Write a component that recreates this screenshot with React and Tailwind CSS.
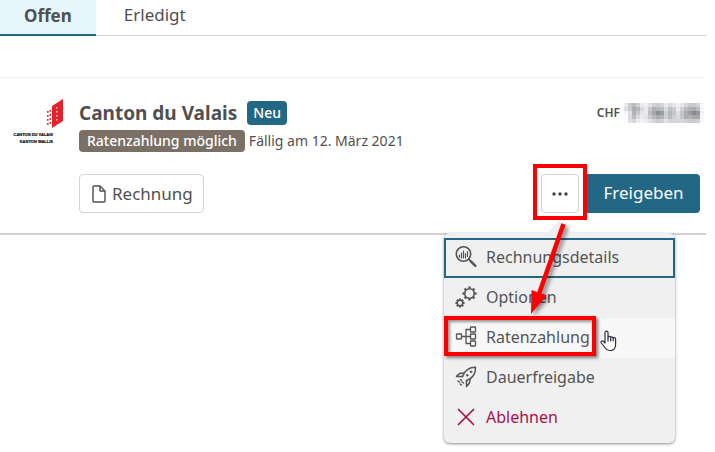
import React from 'react';

// Icons of the action menu, all drawn on a 24px grid
const SearchDetailsIcon = () => (
    <svg width="24" height="24" viewBox="0 0 24 24" fill="none" stroke="currentColor" strokeWidth="1.6" strokeLinecap="round">
        <circle cx="9.5" cy="9" r="7.2" />
        <path d="M5.5 10v2M7.5 8v5M9.5 6v7M11.5 8.5v4.5M13.5 6.5v5" strokeWidth="1.2" />
        <path d="M14.8 14.3l1.6 1.6" />
        <path d="M16.6 16.2l4.8 4.6" strokeWidth="2.4" />
    </svg>
);

const Gear = ({ cx, cy, r, tooth, width }) => (
    <g>
        <circle cx={cx} cy={cy} r={r} strokeWidth={width} />
        {[0, 45, 90, 135, 180, 225, 270, 315].map((angle) => (
            <path
                key={angle}
                d={`M${cx} ${cy - r}v${-tooth}`}
                strokeWidth={width + 0.8}
                transform={`rotate(${angle} ${cx} ${cy})`}
            />
        ))}
    </g>
);

const OptionsIcon = () => (
    <svg width="24" height="24" viewBox="0 0 24 24" fill="none" stroke="currentColor">
        <Gear cx={15.5} cy={8.5} r={4.7} tooth={2.3} width={1.6} />
        <Gear cx={6} cy={18} r={2.7} tooth={1.8} width={1.4} />
    </svg>
);

const InstallmentsIcon = () => (
    <svg width="24" height="24" viewBox="0 0 24 24" fill="none" stroke="currentColor" strokeWidth="1.3">
        <rect x="2.5" y="9" width="5" height="5" rx="0.5" />
        <rect x="16.5" y="2" width="5" height="5" rx="0.5" />
        <rect x="16.5" y="9" width="5" height="5" rx="0.5" />
        <rect x="16.5" y="16" width="5" height="5" rx="0.5" />
        <path d="M7.5 11.5h9M16.5 4.5h-4.5v14h4.5" />
    </svg>
);

const RocketIcon = () => (
    <svg width="24" height="24" viewBox="0 0 24 24" fill="none" stroke="currentColor" strokeWidth="1.5" strokeLinecap="round" strokeLinejoin="round">
        <path d="M8.5 11.5C10.5 6 15 2.2 21.5 2.2C21.8 9 18 13.5 12.5 15.5" />
        <path d="M10 8.2C7 7.5 4.5 8.5 2.5 11.5H8.5M16 13.5C16.3 17 15 19.5 12.5 21.5V15.5" />
        <circle cx="13.2" cy="10.3" r="0.9" fill="currentColor" strokeWidth="0.8" />
        <circle cx="17" cy="6.8" r="0.9" fill="currentColor" strokeWidth="0.8" />
        <path d="M6.5 14.5l1 .8M4 16l1.5 1M8 17l1.500 1M6 19l1.500 1" />
    </svg>
);

const RejectIcon = () => (
    <svg width="24" height="24" viewBox="0 0 24 24" fill="none" stroke="currentColor" strokeWidth="1.7" strokeLinecap="round">
        <path d="M4.5 4.5l15 15M19.5 4.5l-15 15" />
    </svg>
);

const DocumentIcon = () => (
    <svg width="14" height="18" viewBox="0 0 14 18" fill="none" stroke="currentColor" strokeWidth="1.4" strokeLinejoin="round">
        <path d="M1 2.2Q1 1 2.2 1H8l5 5v9.8Q13 17 11.8 17H2.2Q1 17 1 15.8z" />
        <path d="M8 1v5h5" />
    </svg>
);

const MoreIcon = () => (
    <svg width="18" height="4" viewBox="0 0 18 4" fill="#444">
        <circle cx="3" cy="2" r="1.7" />
        <circle cx="9" cy="2" r="1.7" />
        <circle cx="15" cy="2" r="1.7" />
    </svg>
);

const ValaisLogo = () => (
    <svg width="52" height="48" viewBox="0 0 52 48" role="img" aria-label="Canton du Valais" className="shrink-0 overflow-visible">
        <path d="M37 9L48 2v22l-11 7z" fill="#e3222b" />
        {[13, 17, 21, 25].map((y) => (
            <g key={y} fill="#e3222b">
                <rect x="32" y={y + 1} width="1.6" height="1.8" />
                <rect x="34.5" y={y} width="1.6" height="1.8" />
            </g>
        ))}
        {[10, 14, 18, 22].map((y) => (
            <rect key={y} x="41" y={y} width="1.5" height="1.5" fill="#f7c5c8" />
        ))}
        <g textAnchor="end" fontSize="4" fontWeight="bold" fontFamily="Liberation Sans, sans-serif" fill="#111" stroke="#111" strokeWidth="0.2">
            <text x="38" y="39">CANTON DU VALAIS</text>
            <text x="38" y="46">KANTON WALLIS</text>
        </g>
    </svg>
);

// Masked amount, one lightness value per 4px cell
const maskRows = [
    [92, 80, 74, 82, 92, 94, 88, 82, 80, 84, 92, 86, 90, 94, 90, 84, 80, 80, 82, 97],
    [88, 80, 68, 72, 86, 92, 80, 70, 72, 74, 86, 76, 80, 92, 82, 74, 70, 68, 74, 96],
    [96, 88, 70, 78, 90, 92, 74, 66, 56, 62, 82, 72, 78, 88, 78, 68, 62, 54, 60, 95],
    [98, 86, 74, 86, 92, 90, 80, 74, 68, 70, 82, 74, 82, 86, 78, 68, 70, 66, 66, 97],
    [99, 88, 84, 93, 95, 93, 88, 84, 80, 82, 88, 84, 84, 84, 85, 82, 80, 80, 82, 98]
];

const MaskedAmount = () => (
    <svg width="76" height="20" viewBox="0 0 76 20" shapeRendering="crispEdges" aria-hidden="true" className="overflow-visible">
        {maskRows.map((row, y) =>
            row.map((lightness, x) => (
                <rect key={`${x}-${y}`} x={x * 4} y={y * 4} width="4" height="4" fill={`hsl(220 3% ${lightness}%)`} />
            ))
        )}
    </svg>
);

const HandCursor = () => (
    <svg width="18" height="22" viewBox="0 0 18 22" className="absolute top-3 left-39" fill="#fff" stroke="#2d3142" strokeWidth="1.2" strokeLinejoin="round" strokeLinecap="round">
        <path d="M5 13V2.6C5 .6 8 .6 8 2.6V7.5C8 5.8 10.7 6 10.7 7.8C10.7 6.3 13.2 6.5 13.2 8.3C13.2 7 15.6 7.3 15.6 9.2V14C15.6 18 13.5 20.5 10.5 20.5H9.5C6.5 20.5 5.5 18.5 4 16.5L1.3 13C.3 11.5 2 10.2 3.2 11.3z" />
        <path d="M8 7.5V11M10.7 8V11M13.2 8.5V11" fill="none" />
    </svg>
);

const Arrow = () => (
    <svg width="56" height="104" viewBox="0 0 56 104" className="pointer-events-none absolute top-12 -left-4 z-20 drop-shadow-[3px_2px_2px_rgba(0,0,0,0.45)]">
        <path d="M38.5 2L14 72" stroke="#fe0000" strokeWidth="4.5" />
        <path d="M6 92L6.5 68L21.5 73.5z" fill="#fe0000" />
    </svg>
);

const menuItems = [
    { label: 'Rechnungsdetails', icon: SearchDetailsIcon, style: 'text-[#555555] border-[#226784]' },
    { label: 'Optionen', icon: OptionsIcon, style: 'text-[#555555] border-transparent' },
    { label: 'Ratenzahlung', icon: InstallmentsIcon, style: 'text-[#555555] border-transparent bg-[#f7f7f7]', marked: true },
    { label: 'Dauerfreigabe', icon: RocketIcon, style: 'text-[#555555] border-transparent' },
    { label: 'Ablehnen', icon: RejectIcon, style: 'text-[#a8124c] border-transparent' }
];

const ActionMenu = () => (
    <div className="absolute top-[59px] -right-24 z-10 w-[231px] rounded-md bg-[#f0f0f0] py-[5px] shadow-[0_1px_3px_rgba(0,0,0,0.45)]">
        <svg width="24" height="12" viewBox="0 0 24 12" className="absolute -top-3 right-26">
            <path d="M0 12L12 0l12 12z" fill="#f0f0f0" />
        </svg>
        {menuItems.map(({ label, icon: Icon, style, marked }) => (
            <div key={label} className="relative">
                <button type="button" className={`flex h-10 w-full items-center gap-2 border-2 pb-0.5 pl-2 text-base ${style}`}>
                    <Icon />
                    {label}
                </button>
                {marked && (
                    <>
                        <div className="pointer-events-none absolute -top-0.5 left-0 h-10 w-38 border-4 border-[#fe0000] shadow-[2px_2px_3px_rgba(0,0,0,0.5),inset_2px_2px_3px_rgba(0,0,0,0.4)]" />
                        <HandCursor />
                    </>
                )}
            </div>
        ))}
    </div>
);

export default function App() {
    return (
        <div className="min-h-screen bg-white pr-[9px] font-['Noto_Sans',sans-serif] text-[#505050]">
            <nav className="flex h-9 border-b border-[#d2d2d2] text-[17px]">
                <button type="button" className="h-9 border-b-2 border-[#226784] bg-[#e6f7fc] px-6 pb-0.5 font-bold">Offen</button>
                <button type="button" className="h-9 px-7 pb-1.5">Erledigt</button>
            </nav>

            <article className="mt-[41px] flex border-t border-b-2 border-t-[#f3f3f3] border-b-[#d2d2d2] pt-[19px] pr-1.5 pb-5 pl-[15px]">
                <ValaisLogo />
                <div className="ml-3 min-w-0 flex-1">
                    <div className="flex items-start justify-between">
                        <div>
                            <div className="flex h-8 items-center gap-2.5">
                                <h1 className="text-[19px] font-bold">Canton du Valais</h1>
                                <span className="flex h-6 items-center rounded-sm bg-[#226784] px-1.5 text-sm font-medium text-white">Neu</span>
                            </div>
                            <div className="flex h-6 items-center gap-1 text-sm">
                                <span className="flex h-[22px] items-center rounded-sm bg-[#7b7065] px-2 font-medium text-white">Ratenzahlung möglich</span>
                                <span>Fällig am 12. März 2021</span>
                            </div>
                        </div>
                        <div className="flex h-8 items-center gap-1">
                            <span className="text-xs font-semibold">CHF</span>
                            <MaskedAmount />
                        </div>
                    </div>

                    <div className="mt-[21px] flex justify-between text-[17px]">
                        <button type="button" className="flex h-[39px] items-center gap-1.5 rounded-sm border border-[#d2d2d2] bg-white pr-2.5 pl-3">
                            <DocumentIcon />
                            Rechnung
                        </button>
                        <div className="flex gap-2">
                            <div className="relative">
                                <button type="button" aria-label="Weitere Aktionen" className="flex h-[39px] w-[38px] items-center justify-center rounded-sm border border-[#d2d2d2] bg-white">
                                    <MoreIcon />
                                </button>
                                <ActionMenu />
                                <div className="pointer-events-none absolute -top-2.5 -left-2 z-10 h-14 w-[54px] border-4 border-[#fe0000]" />
                                <Arrow />
                            </div>
                            <button type="button" className="h-[39px] w-[113px] rounded-r-sm bg-[#226784] pb-0.5 text-white">Freigeben</button>
                        </div>
                    </div>
                </div>
            </article>
        </div>
    );
}
